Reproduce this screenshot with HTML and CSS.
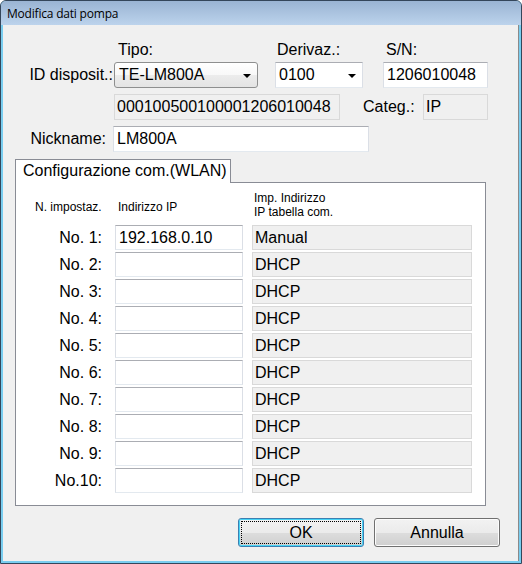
FILE: index.html
```html
<!DOCTYPE html>
<html>
<head>
<meta charset="utf-8">
<link rel="stylesheet" href="styles.css">
</head>
<body>
<div class="window">
  <div class="titlebar"><span class="title">Modifica dati pompa</span></div>
  <div class="client">
    <div class="row row-labels">
      <span class="cap cap-tipo">Tipo:</span>
      <span class="cap cap-deriv">Derivaz.:</span>
      <span class="cap">S/N:</span>
    </div>
    <div class="row row-combo">
      <span class="lbl lbl-id">ID disposit.:</span>
      <div class="combo combo-list w-tipo"><span>TE-LM800A</span><span class="arrow"></span></div>
      <div class="combo combo-edit w-deriv"><span>0100</span><span class="arrow"></span></div>
      <div class="field w-sn">1206010048</div>
    </div>
    <div class="row row-id">
      <div class="field ro w-id">000100500100001206010048</div>
      <span class="lbl lbl-categ">Categ.:</span>
      <div class="field ro w-categ">IP</div>
    </div>
    <div class="row row-nick">
      <span class="lbl lbl-nick">Nickname:</span>
      <div class="field w-nick">LM800A</div>
    </div>
    <div class="tabs">
      <div class="tab">Configurazione com.(WLAN)</div>
    </div>
    <div class="panel">
      <div class="grid head">
        <span class="h h-num">N. impostaz.</span>
        <span class="h h-ip">Indirizzo IP</span>
        <span class="h h-imp">Imp. Indirizzo<br>IP tabella com.</span>
      </div>
      <div class="grid rows">
        <span class="num">No. 1:</span><div class="field ip">192.168.0.10</div><div class="field ro st">Manual</div>
        <span class="num">No. 2:</span><div class="field ip"></div><div class="field ro st">DHCP</div>
        <span class="num">No. 3:</span><div class="field ip"></div><div class="field ro st">DHCP</div>
        <span class="num">No. 4:</span><div class="field ip"></div><div class="field ro st">DHCP</div>
        <span class="num">No. 5:</span><div class="field ip"></div><div class="field ro st">DHCP</div>
        <span class="num">No. 6:</span><div class="field ip"></div><div class="field ro st">DHCP</div>
        <span class="num">No. 7:</span><div class="field ip"></div><div class="field ro st">DHCP</div>
        <span class="num">No. 8:</span><div class="field ip"></div><div class="field ro st">DHCP</div>
        <span class="num">No. 9:</span><div class="field ip"></div><div class="field ro st">DHCP</div>
        <span class="num">No.10:</span><div class="field ip"></div><div class="field ro st">DHCP</div>
      </div>
    </div>
    <div class="buttons">
      <div class="btn btn-default"><span class="focus">OK</span></div>
      <div class="btn">Annulla</div>
    </div>
  </div>
</div>
</body>
</html>
```
FILE: styles.css
```css
html, body {
  margin: 0;
  padding: 0;
  background: #ffffff;
}
body {
  font-family: "Liberation Sans", Arial, sans-serif;
  font-size: 16px;
  color: #000;
}
.window {
  width: 522px;
  height: 564px;
  box-sizing: border-box;
  border: 1px solid #34465a;
  border-radius: 6px 6px 0 0;
  background: #79cdef;
  display: flex;
  flex-direction: column;
  overflow: hidden;
}
.titlebar {
  height: 24px;
  flex: none;
  background: linear-gradient(#9ab4d3, #bcd3ec);
  display: flex;
  align-items: center;
  padding-left: 6px;
}
.title {
  font-family: "Open Sans", "Noto Sans", sans-serif;
  font-size: 12px;
  color: #000;
  letter-spacing: -0.2px;
}
.client {
  flex: 1;
  margin: 0 2px 2px 2px;
  background: #f0f0f0;
  border-right: 1px solid #8a8a8a;
}
.row {
  display: flex;
  align-items: center;
}
.row-labels {
  margin-top: 16px;
  height: 18px;
  line-height: 18px;
}
.cap-tipo { margin-left: 115px; width: 159px; }
.cap-deriv { width: 109px; }
.row-combo {
  margin-top: 3px;
  height: 26px;
}
.lbl-id {
  width: 111px;
  box-sizing: border-box;
  text-align: right;
  padding-right: 1px;
}
.field {
  box-sizing: border-box;
  height: 26px;
  line-height: 24px;
  background: #fff;
  border: 1px solid #dbdfe6;
  border-top-color: #abadb3;
  border-bottom-color: #e3e9ef;
  padding-left: 3px;
  white-space: nowrap;
  overflow: hidden;
}
.field.ro {
  background: #f0f0f0;
  border: 1px solid #d9d9d9;
  padding-left: 2px;
}
.combo {
  box-sizing: border-box;
  height: 26px;
  display: flex;
  align-items: center;
  justify-content: space-between;
  padding: 0 6px 0 4px;
}
.combo-list {
  border: 1px solid #8e8f8f;
  border-radius: 3px;
  background: linear-gradient(#ffffff 0%, #f8f8f8 50%, #ececec 51%, #e4e4e4 100%);
}
.combo-edit {
  background: #fff;
  border: 1px solid #dbdfe6;
  border-top-color: #abadb3;
  border-bottom-color: #e3e9ef;
  padding-left: 3px;
}
.arrow {
  width: 0;
  height: 0;
  border-left: 4px solid transparent;
  border-right: 4px solid transparent;
  border-top: 4px solid #000;
  margin-top: 2px;
}
.w-tipo { width: 144px; }
.w-deriv { width: 88px; margin-left: 17px; }
.w-sn { width: 105px; margin-left: 20px; }
.row-id {
  margin-top: 6px;
  height: 26px;
}
.w-id { width: 226px; margin-left: 111px; }
.lbl-categ { margin-left: 23px; width: 60px; }
.w-categ { width: 65px; }
.row-nick {
  margin-top: 6px;
  height: 26px;
}
.lbl-nick {
  width: 110px;
  box-sizing: border-box;
  text-align: right;
  padding-right: 7px;
}
.w-nick { width: 256px; }
.tabs {
  margin-top: 7px;
  padding-left: 12px;
  display: flex;
  position: relative;
  z-index: 1;
}
.tab {
  box-sizing: border-box;
  width: 216px;
  height: 24px;
  line-height: 22px;
  background: #fff;
  border: 1px solid #898c95;
  border-bottom: none;
  padding-left: 7px;
}
.panel {
  margin: -1px 0 0 12px;
  width: 471px;
  height: 324px;
  box-sizing: border-box;
  background: #fff;
  border: 1px solid #898c95;
  padding-top: 8px;
}
.grid {
  display: grid;
  grid-template-columns: 90px 128px 220px;
  column-gap: 9px;
}
.head {
  height: 28px;
  font-size: 12px;
  line-height: 14px;
}
.h-num { padding-left: 19px; padding-top: 9px; white-space: nowrap; }
.h-ip { padding-left: 3px; padding-top: 9px; }
.h-imp { padding-left: 2px; }
.rows {
  margin-top: 6px;
  row-gap: 2px;
  grid-auto-rows: 25px;
}
.rows .field {
  height: 25px;
  line-height: 23px;
}
.num {
  text-align: right;
  padding-right: 4px;
  line-height: 25px;
}
.buttons {
  display: flex;
  justify-content: flex-end;
  gap: 10px;
  margin-top: 12px;
  padding-right: 18px;
}
.btn {
  box-sizing: border-box;
  width: 126px;
  height: 29px;
  border: 1px solid #707070;
  border-radius: 3px;
  background: linear-gradient(#f2f2f2 0%, #ebebeb 50%, #dddddd 51%, #cfcfcf 100%);
  display: flex;
  align-items: center;
  justify-content: center;
  box-shadow: inset 0 0 0 1px #fcfcfc;
}
.btn-default {
  border-color: #3c7fb1;
  box-shadow: inset 0 0 0 1px #48d4f6;
  padding: 2px;
}
.focus {
  flex: 1;
  align-self: stretch;
  display: flex;
  align-items: center;
  justify-content: center;
  border: 1px dotted #000;
}
```
